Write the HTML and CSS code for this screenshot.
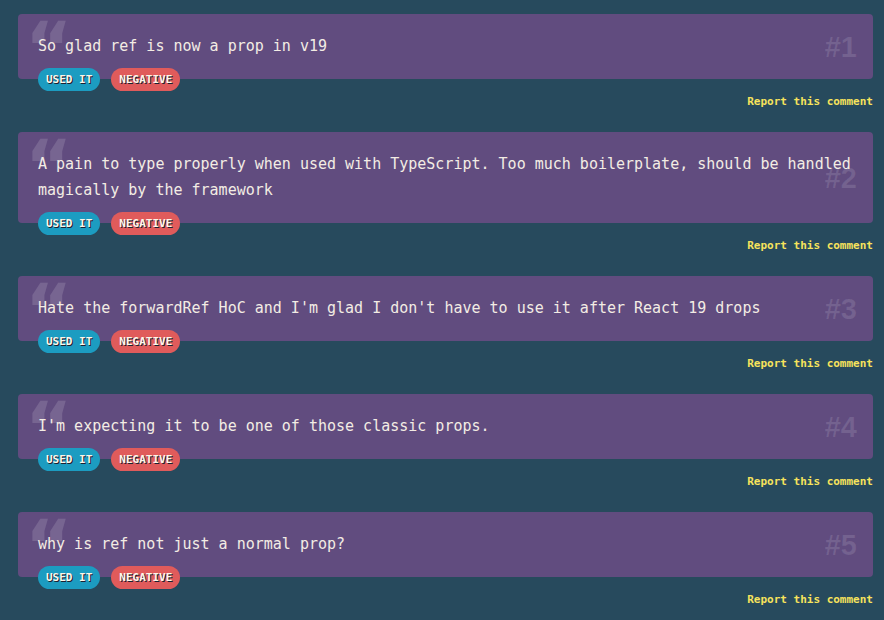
FILE: index.html
```html
<!DOCTYPE html>
<html lang="en">
<head>
    <meta charset="UTF-8">
    <meta name="viewport" content="width=device-width, initial-scale=1.0">
    <title>Comments</title>
    <link rel="stylesheet" href="styles.css">
</head>
<body>
    <div class="comments">
        <div class="comment">
            <div class="comment-box">
                <span class="quote">&ldquo;</span>
                <p class="comment-text">So glad ref is now a prop in v19</p>
                <span class="comment-num">#1</span>
            </div>
            <div class="tags">
                <span class="tag tag-used">Used it</span>
                <span class="tag tag-negative">Negative</span>
            </div>
            <div class="report"><a href="#">Report this comment</a></div>
        </div>

        <div class="comment">
            <div class="comment-box">
                <span class="quote">&ldquo;</span>
                <p class="comment-text">A pain to type properly when used with TypeScript. Too much boilerplate, should be handled magically by the framework</p>
                <span class="comment-num">#2</span>
            </div>
            <div class="tags">
                <span class="tag tag-used">Used it</span>
                <span class="tag tag-negative">Negative</span>
            </div>
            <div class="report"><a href="#">Report this comment</a></div>
        </div>

        <div class="comment">
            <div class="comment-box">
                <span class="quote">&ldquo;</span>
                <p class="comment-text">Hate the forwardRef HoC and I'm glad I don't have to use it after React 19 drops</p>
                <span class="comment-num">#3</span>
            </div>
            <div class="tags">
                <span class="tag tag-used">Used it</span>
                <span class="tag tag-negative">Negative</span>
            </div>
            <div class="report"><a href="#">Report this comment</a></div>
        </div>

        <div class="comment">
            <div class="comment-box">
                <span class="quote">&ldquo;</span>
                <p class="comment-text">I'm expecting it to be one of those classic props.</p>
                <span class="comment-num">#4</span>
            </div>
            <div class="tags">
                <span class="tag tag-used">Used it</span>
                <span class="tag tag-negative">Negative</span>
            </div>
            <div class="report"><a href="#">Report this comment</a></div>
        </div>

        <div class="comment">
            <div class="comment-box">
                <span class="quote">&ldquo;</span>
                <p class="comment-text">why is ref not just a normal prop?</p>
                <span class="comment-num">#5</span>
            </div>
            <div class="tags">
                <span class="tag tag-used">Used it</span>
                <span class="tag tag-negative">Negative</span>
            </div>
            <div class="report"><a href="#">Report this comment</a></div>
        </div>
    </div>
</body>
</html>
```

FILE: styles.css
```css
body {
    margin: 0;
    background-color: #274a5d;
    font-family: "DejaVu Sans Mono", "Liberation Mono", monospace;
    color: #f3ece4;
}
.comments {
    padding: 14px 11px 0 18px;
}
.comment {
    margin-bottom: 23px;
}
.comment-box {
    position: relative;
    background-color: #614c7f;
    border-radius: 4px;
    padding: 19px 20px 20px;
}
.quote {
    position: absolute;
    left: 7px;
    top: -2px;
    font-family: "DejaVu Sans", sans-serif;
    font-weight: bold;
    font-size: 72px;
    line-height: 1;
    color: rgba(255, 255, 255, 0.14);
}
.comment-text {
    position: relative;
    margin: 0;
    font-size: 15px;
    line-height: 26px;
}
.comment-num {
    position: absolute;
    right: 16px;
    top: 50%;
    transform: translateY(-50%);
    font-family: "Liberation Sans", sans-serif;
    font-weight: bold;
    font-size: 29px;
    color: rgba(255, 255, 255, 0.12);
}
.tags {
    position: relative;
    display: flex;
    gap: 11px;
    margin-top: -11px;
    padding-left: 20px;
}
.tag {
    height: 23px;
    line-height: 23px;
    padding: 0 8px;
    border-radius: 12px;
    font-size: 11px;
    font-weight: bold;
    text-transform: uppercase;
    color: #fdf6ea;
    text-shadow: 1px 1px 0 #1d2030;
}
.tag-used {
    background-color: #1c9cc1;
}
.tag-negative {
    background-color: #e05b5b;
}
.report {
    text-align: right;
    margin-top: 4px;
    font-size: 11px;
    line-height: 14px;
}
.report a {
    font-weight: bold;
    color: #f7e35c;
    text-decoration: none;
}
```
